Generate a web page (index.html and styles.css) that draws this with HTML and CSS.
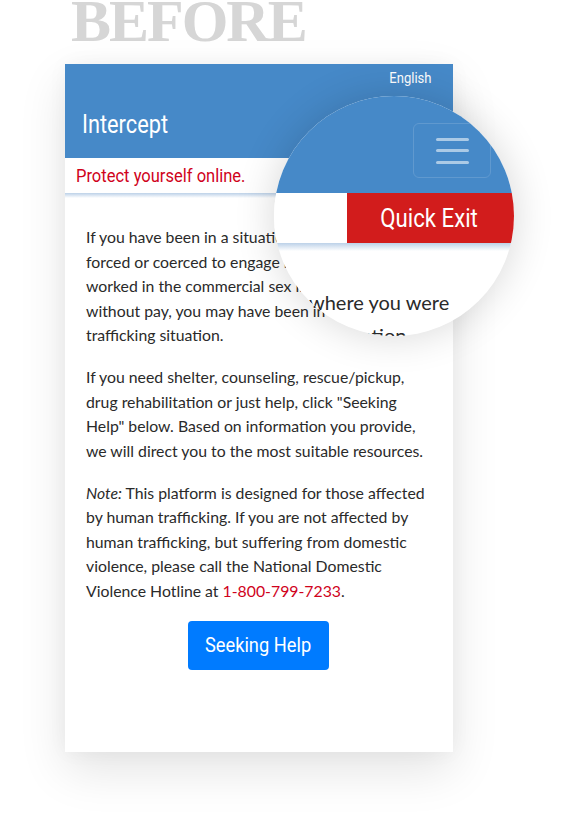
FILE: index.html
```html
<!DOCTYPE html>
<html lang="en">
<head>
<meta charset="utf-8">
<title>Intercept – Before</title>
<link rel="stylesheet" href="styles.css">
</head>
<body>
<div class="stage">
  <h1 class="label">BEFORE</h1>
  <div class="phone">
    <header class="topbar">
      <div class="lang"><span class="cond cond-r">English</span></div>
      <div class="brand"><span class="cond">Intercept</span></div>
    </header>
    <div class="tagline"><span class="cond">Protect yourself online.</span></div>
    <main class="content">
      <p>If you have been in a situation where you were<br>forced or coerced to engage in commercial sex,<br>worked in the commercial sex industry, or<br>without pay, you may have been in a human<br>trafficking situation.</p>
      <p>If you need shelter, counseling, rescue/pickup, drug rehabilitation or just help, click "Seeking Help" below. Based on information you provide, we will direct you to the most suitable resources.</p>
      <p><em>Note:</em> This platform is designed for those affected by human trafficking. If you are not affected by human trafficking, but suffering from domestic violence, please call the National Domestic Violence Hotline at <a class="phone-link" href="#">1-800-799-7233</a>.</p>
      <div class="actions"><button class="btn"><span class="cond cond-c">Seeking Help</span></button></div>
    </main>
    <div class="magnifier">
      <div class="mag-top">
        <div class="burger"><span></span><span></span><span></span></div>
      </div>
      <div class="mag-row">
        <div class="mag-white"></div>
        <div class="mag-exit"><span class="cond cond-c">Quick Exit</span></div>
      </div>
      <div class="mag-shade"></div>
      <div class="mag-line l1">where you were</div>
      <div class="mag-line l2">situation</div>
    </div>
  </div>
</div>
</body>
</html>
```
FILE: styles.css
```css
* { box-sizing: border-box; }
html, body { margin: 0; padding: 0; background: #fff; }
body { width: 575px; height: 823px; overflow: hidden; }
.label {
  margin: 0 0 22px 0;
  padding-left: 71px;
  font-family: "Liberation Serif", serif;
  font-weight: 700;
  font-size: 60px;
  line-height: 42px;
  letter-spacing: -2px;
  color: #d6d6d6;
}
.cond {
  display: inline-block;
  transform: scaleX(0.87);
  transform-origin: left center;
  white-space: nowrap;
}
.cond-r { transform-origin: right center; }
.cond-c { transform-origin: center center; }
.phone {
  position: relative;
  margin-left: 65px;
  width: 388px;
  height: 688px;
  background: #fff;
  box-shadow: 0 18px 45px rgba(0,0,0,0.11), 0 0 20px rgba(0,0,0,0.04);
}
.topbar {
  height: 94px;
  background: #4689c8;
  color: #fff;
  font-family: Roboto, sans-serif;
  display: flex;
  flex-direction: column;
  padding: 6px 21px 0 17px;
}
.lang {
  align-self: flex-end;
  font-size: 15px;
  line-height: 17px;
}
.brand {
  margin-top: 23px;
  font-size: 25px;
  line-height: 30px;
}
.tagline {
  position: relative;
  height: 35px;
  padding: 7px 11px 0;
  font-family: Roboto, sans-serif;
  font-size: 19px;
  line-height: 22px;
  color: #d0021b;
}
.tagline::after {
  content: "";
  position: absolute;
  left: 0; right: 0; top: 100%;
  height: 5px;
  background: linear-gradient(#bcd1e8, rgba(188,209,232,0));
}
.content {
  padding: 32px 21px 0 21px;
  font-family: Lato, sans-serif;
  font-size: 15.8px;
  line-height: 24.5px;
  color: #2a2a2a;
}
.content p { margin: 0 0 17.5px; }
.phone-link { color: #d0021b; text-decoration: none; }
.actions { display: flex; justify-content: center; margin-left: -2px; }
.btn {
  width: 141px;
  height: 49px;
  border: none;
  border-radius: 4px;
  background: #007bff;
  color: #fff;
  font-family: Roboto, sans-serif;
  font-size: 21px;
  padding: 0;
}
.magnifier {
  position: absolute;
  left: 209px;
  top: 32px;
  width: 240px;
  height: 240px;
  border-radius: 50%;
  overflow: hidden;
  background: #fff;
  box-shadow: 0 0 40px rgba(0,0,0,0.16);
}
.mag-top {
  position: relative;
  height: 97px;
  background: #4689c8;
}
.burger {
  position: absolute;
  left: 139px;
  top: 27px;
  width: 78px;
  height: 55px;
  border: 1px solid rgba(255,255,255,0.14);
  border-radius: 6px;
  display: flex;
  flex-direction: column;
  justify-content: center;
  gap: 8.5px;
  padding-left: 22px;
}
.burger span {
  display: block;
  width: 33px;
  height: 3px;
  border-radius: 2px;
  background: rgba(255,255,255,0.55);
}
.mag-row { display: flex; height: 50px; }
.mag-white { width: 73px; background: #fff; }
.mag-exit {
  flex: 1;
  background: #d21c1c;
  color: #fff;
  font-family: Roboto, sans-serif;
  font-size: 25.5px;
  line-height: 50px;
  text-align: center;
  padding-right: 2px;
}
.mag-shade {
  height: 8px;
  background: linear-gradient(#bcd1e8, rgba(188,209,232,0));
}
.mag-line {
  position: absolute;
  font-family: Lato, sans-serif;
  font-size: 20px;
  line-height: 33px;
  color: #2a2a2a;
  white-space: nowrap;
}
.l1 { left: 35px; top: 190px; }
.l2 { left: 56px; top: 223px; }
```
